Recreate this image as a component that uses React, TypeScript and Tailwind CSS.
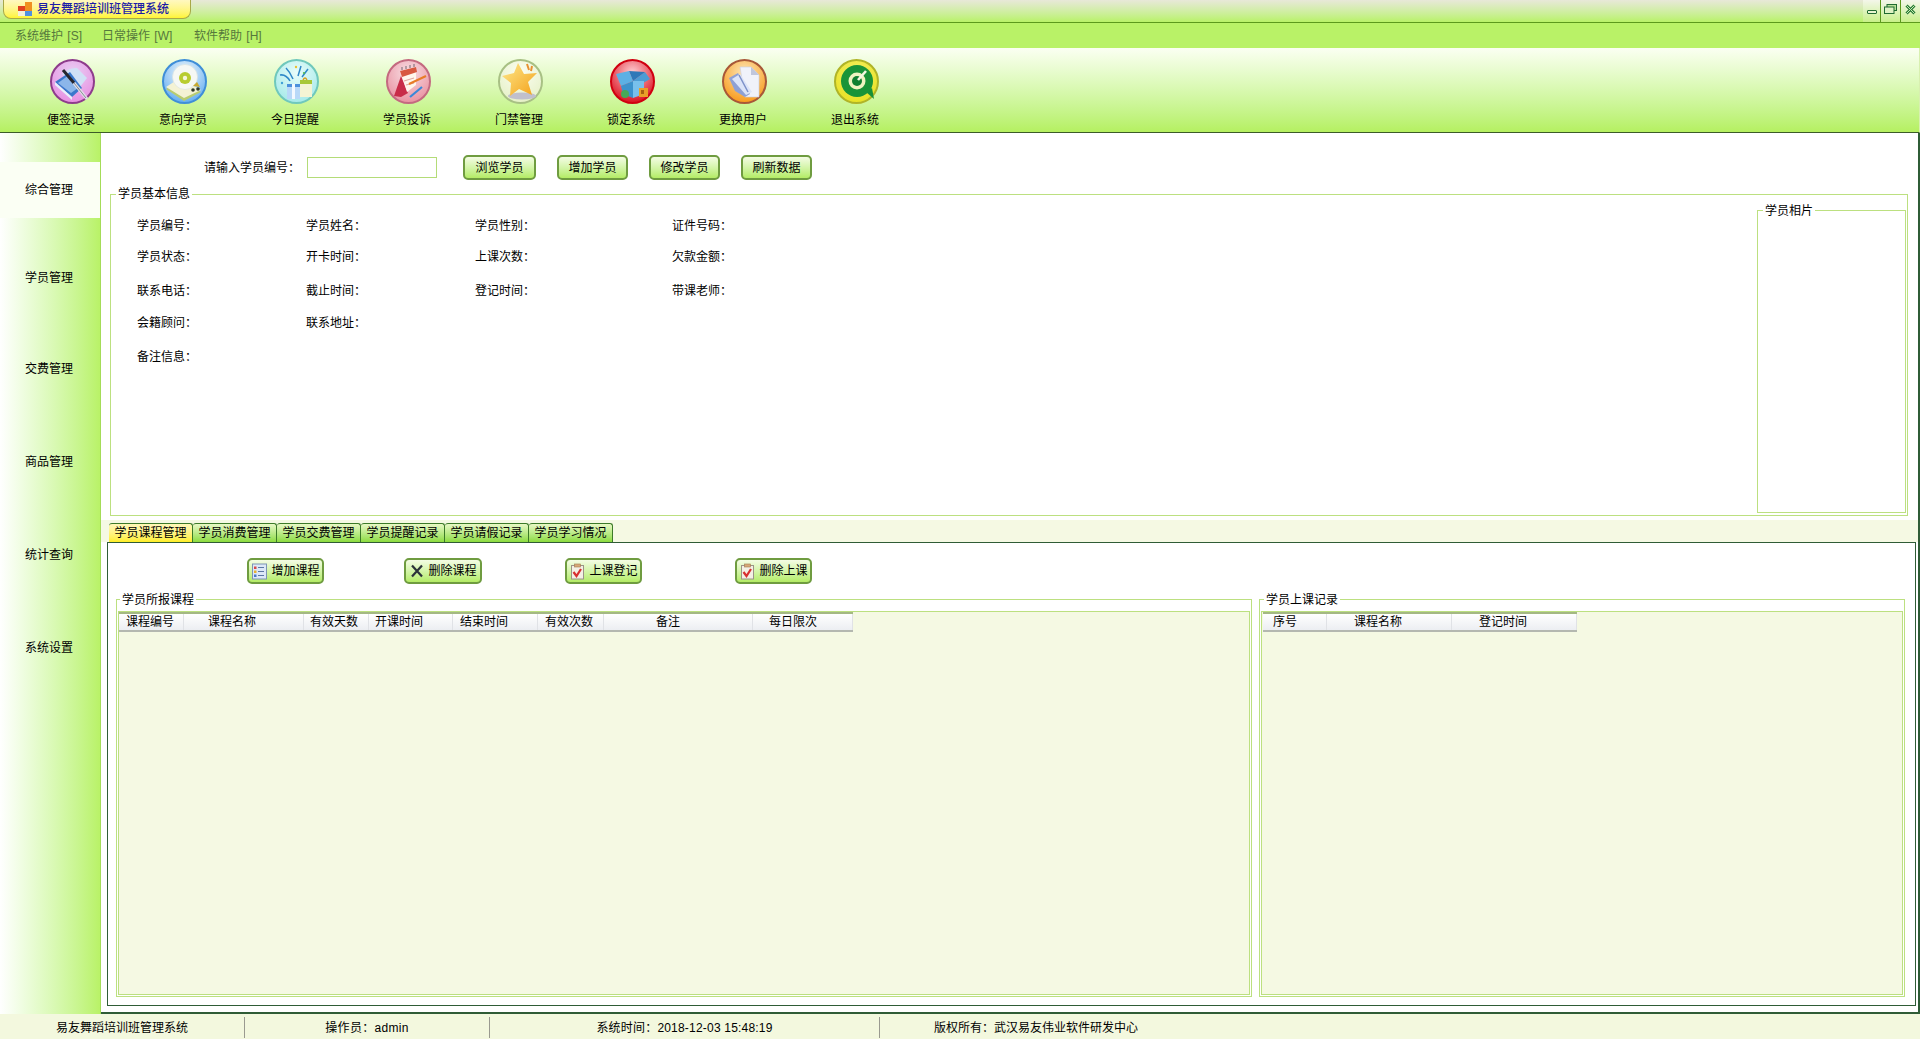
import type { ReactNode } from 'react';
import { useId } from 'react';

const menus = [
    { label: '系统维护 [S]', w: 'w-[87px]' },
    { label: '日常操作 [W]', w: 'w-[92px]' },
    { label: '软件帮助 [H]', w: 'w-[80px]' },
];
const sideItems = [
    { label: '学员管理', h: 'h-[91px]' },
    { label: '交费管理', h: 'h-[93px]' },
    { label: '商品管理', h: 'h-[93px]' },
    { label: '统计查询', h: 'h-[93px]' },
    { label: '系统设置', h: 'h-[93px]' },
];
const topButtons = [
    { label: '浏览学员', w: 'w-[73px]' },
    { label: '增加学员', w: 'w-[71px]' },
    { label: '修改学员', w: 'w-[71px]' },
    { label: '刷新数据', w: 'w-[71px]' },
];
const tabs = ['学员课程管理', '学员消费管理', '学员交费管理', '学员提醒记录', '学员请假记录', '学员学习情况'];

const fieldRows = [
    { h: 'h-[31px]', items: ['学员编号：', '学员姓名：', '学员性别：', '证件号码：'] },
    { h: 'h-[31px]', items: ['学员状态：', '开卡时间：', '上课次数：', '欠款金额：'] },
    { h: 'h-[37px]', items: ['联系电话：', '截止时间：', '登记时间：', '带课老师：'] },
    { h: 'h-[27px]', items: ['会籍顾问：', '联系地址：'] },
    { h: 'h-[42px]', items: ['备注信息：'] },
];
const fieldWidths = ['w-[169px]', 'w-[169px]', 'w-[197px]', 'w-[100px]'];

const courseCols = [
    { label: '课程编号', w: 'w-[65px]', pl: 'pl-[7px]' },
    { label: '课程名称', w: 'w-[120px]', pl: 'pl-[24px]' },
    { label: '有效天数', w: 'w-[65px]', pl: 'pl-[6px]' },
    { label: '开课时间', w: 'w-[84px]', pl: 'pl-[6px]' },
    { label: '结束时间', w: 'w-[85px]', pl: 'pl-[7px]' },
    { label: '有效次数', w: 'w-[66px]', pl: 'pl-[7px]' },
    { label: '备注', w: 'w-[149px]', pl: 'pl-[52px]' },
    { label: '每日限次', w: 'w-[100px]', pl: 'pl-[16px]' },
];
const recordCols = [
    { label: '序号', w: 'w-[64px]', pl: 'pl-[10px]' },
    { label: '课程名称', w: 'w-[125px]', pl: 'pl-[27px]' },
    { label: '登记时间', w: 'w-[125px]', pl: 'pl-[27px]' },
];

function Orb({ ring, inner, edge, children }: { ring: string; inner: string; edge: string; children: ReactNode }) {
    const id = useId();
    return (
        <svg width="45" height="45" viewBox="0 0 45 45">
            <defs>
                <radialGradient id={id} cx="50%" cy="30%" r="75%">
                    <stop offset="0%" stopColor={inner} />
                    <stop offset="100%" stopColor={ring} />
                </radialGradient>
            </defs>
            <circle cx="22.5" cy="22.5" r="21.5" fill={`url(#${id})`} stroke={edge} strokeWidth="2" />
            {children}
        </svg>
    );
}

const toolbar: { label: string; icon: ReactNode }[] = [
    {
        label: '便签记录',
        icon: (
            <Orb ring="#e88ae0" inner="#e8d0f4" edge="#8e3c8c">
                <path d="M12 15 Q20 8 27 9 L37 19 L30 28 Z" fill="#d0e0f6" />
                <path d="M5 23 L20 13 L32 29 L22 38 Z" fill="#3a78cc" />
                <path d="M8 24 L19 16 L28 29 L21 34 Z" fill="#8cb6ea" />
                <path d="M5 23 L22 38 L22 41 L5 26 Z" fill="#e8f0fa" />
                <path d="M13 11 L24 24" stroke="#26262e" strokeWidth="3" />
                <path d="M24 24 L37 40" stroke="#e0e0e8" strokeWidth="3" />
                <path d="M24 24 L36 39" stroke="#8a8a94" strokeWidth="1" />
            </Orb>
        ),
    },
    {
        label: '意向学员',
        icon: (
            <Orb ring="#5aa8f0" inner="#f4fafc" edge="#3f8ed8">
                <path d="M4 30 L18 21 L39 33 L22 42 Z" fill="#b8cc70" />
                <path d="M4 28 L18 19 L39 31 L22 39 Z" fill="#f4f2d4" />
                <circle cx="23" cy="18" r="12.5" fill="#f6f8f4" stroke="#d8e0dc" strokeWidth="0.6" />
                <circle cx="23" cy="19" r="6" fill="#b8cc30" />
                <circle cx="23" cy="19" r="2.2" fill="#f6f6dc" />
                <path d="M31 27 L35 23 L38 28 Z" fill="#c8a830" />
                <circle cx="31" cy="31" r="1.8" fill="#303828" />
                <circle cx="36" cy="30" r="1.8" fill="#303828" />
            </Orb>
        ),
    },
    {
        label: '今日提醒',
        icon: (
            <Orb ring="#a0e8e8" inner="#e8fcfa" edge="#70c8bc">
                <rect x="13" y="27" width="13" height="13" fill="#b8d8f8" />
                <rect x="13" y="25" width="13" height="3" fill="#4c90dc" />
                <rect x="18" y="25" width="3" height="15" fill="#f2f8ff" />
                <rect x="26" y="25" width="12" height="13" fill="#f4f4d4" />
                <path d="M26 21 H38 V25 H26 Z" fill="#a8c838" />
                <path d="M29 21 Q31 17 33 21" fill="none" stroke="#d8a020" strokeWidth="1.4" />
                <path d="M6 16 Q12 15 16 22 M12 9 Q16 13 19 20 M27 7 L24 17 M34 10 L28 18" fill="none" stroke="#2f88c8" strokeWidth="1.5" />
                <circle cx="22" cy="8" r="1.2" fill="#e8c030" />
                <circle cx="8" cy="24" r="1.2" fill="#40a0d8" />
                <circle cx="30" cy="14" r="1.1" fill="#50b850" />
            </Orb>
        ),
    },
    {
        label: '学员投诉',
        icon: (
            <Orb ring="#e88c9c" inner="#f8dfe4" edge="#c46a80">
                <path d="M8 37 L15 17 L22 34 L15 38 Z" fill="#c82c48" />
                <path d="M14 12 L30 8 L30 26 L21 33 Z" fill="#fff6ec" />
                <path d="M14 12 L30 8 L31 13 L16 18 Z" fill="#d85840" />
                <path d="M16 11 L16 8 M20 10 L20 7 M24 9 L24 6 M28 8 L28 5" stroke="#706870" strokeWidth="1" />
                <path d="M18 22 L28 19 M20 26 L28 24" stroke="#e0a8a0" strokeWidth="1.2" />
                <path d="M23 25 L40 17" stroke="#e87c28" strokeWidth="2" />
                <path d="M24 38 L36 28" stroke="#3a88d8" strokeWidth="2.2" />
            </Orb>
        ),
    },
    {
        label: '门禁管理',
        icon: (
            <Orb ring="#e4f0c4" inner="#fbfdf2" edge="#a8c084">
                <defs>
                    <linearGradient id="star-fill" x1="0" y1="0" x2="1" y2="1">
                        <stop offset="0%" stopColor="#fde98c" />
                        <stop offset="100%" stopColor="#f4a018" />
                    </linearGradient>
                </defs>
                <ellipse cx="24" cy="37" rx="14" ry="3.5" fill="#c0c0cc" />
                <path d="M20 4 L26 15 L39 14 L30 23 L34 36 L21 30 L12 37 L13 24 L4 17 L16 14 Z" fill="url(#star-fill)" />
                <path d="M29 5 L31 11 M34 7 L33 12" stroke="#e89030" strokeWidth="2" />
            </Orb>
        ),
    },
    {
        label: '锁定系统',
        icon: (
            <Orb ring="#d80010" inner="#ffd0d4" edge="#d00010">
                <path d="M6 15 L19 12 L23 22 L11 27 Z" fill="#5cb0e4" />
                <path d="M23 22 L35 13 L40 20 L28 27 Z" fill="#4c9cd4" />
                <path d="M19 12 L35 13 L23 22 Z" fill="#2f78b8" />
                <path d="M11 27 L23 22 L23 39 L13 35 Z" fill="#3c92cc" />
                <path d="M23 22 L34 22 L34 35 L23 39 Z" fill="#78c0ec" />
                <rect x="29" y="29" width="9" height="9" fill="#e8a028" />
                <rect x="31" y="31" width="3" height="4" fill="#a86010" />
                <circle cx="15" cy="35" r="4" fill="#48a858" />
            </Orb>
        ),
    },
    {
        label: '更换用户',
        icon: (
            <Orb ring="#f89410" inner="#fde8b8" edge="#a85838">
                <path d="M18 8 L29 8 L37 16 L37 38 L23 38 Z" fill="#f0f2fa" stroke="#c8cce0" strokeWidth="0.6" />
                <path d="M29 8 L37 16 L29 16 Z" fill="#c0c6dc" />
                <path d="M7 19 L16 14 L28 35 L23 38 L13 32 Z" fill="#8ea0d4" />
                <path d="M10 20 L18 15 L30 33 L24 36 Z" fill="#dce4f8" />
                <path d="M17 16 L26 33" stroke="#7c90c8" strokeWidth="1.5" />
            </Orb>
        ),
    },
    {
        label: '退出系统',
        icon: (
            <Orb ring="#e8e020" inner="#f4f060" edge="#b0b428">
                <path d="M32 33 L40 40 L38 29 Z" fill="#189038" />
                <circle cx="23" cy="22" r="16" fill="#1a9438" />
                <circle cx="23" cy="22" r="8.5" fill="#f0f4c0" />
                <circle cx="23" cy="22" r="5" fill="#108030" />
                <path d="M24 21 L32 12" stroke="#f4f8e0" strokeWidth="2.6" />
            </Orb>
        ),
    },
];

function GreenButton({ className, children }: { className: string; children: ReactNode }) {
    return (
        <div
            className={`flex items-center justify-center rounded-[5px] border-2 border-[#6f9c40] bg-gradient-to-b from-[#f4fce4] to-[#b4ec64] text-[12px] text-black ${className}`}
        >
            {children}
        </div>
    );
}

function Legend({ children, className }: { children: ReactNode; className: string }) {
    return <span className={`absolute bg-white px-[2px] text-[12px] leading-[15px] text-black ${className}`}>{children}</span>;
}

function TableHeader({ cols, className }: { cols: { label: string; w: string; pl: string }[]; className: string }) {
    return (
        <div className={`flex h-[20px] border-t-2 border-b-2 border-t-[#a4b884] border-b-[#b4b8b0] bg-gradient-to-b from-white to-[#eceef2] ${className}`}>
            {cols.map((col) => (
                <div key={col.label} className={`border-r border-[#e0e2e6] text-[12px] leading-[16px] whitespace-nowrap ${col.w} ${col.pl}`}>
                    {col.label}
                </div>
            ))}
        </div>
    );
}

function ListIcon() {
    return (
        <svg width="17" height="17" viewBox="0 0 17 17">
            <rect x="1.5" y="1" width="14" height="15" fill="#dce8f8" stroke="#7c94b4" />
            <path d="M7 4.5 H13 M7 8.5 H13 M7 12.5 H13" stroke="#5c78a4" />
            <rect x="3" y="3.5" width="2.5" height="2.5" fill="#d84848" />
            <rect x="3" y="7.5" width="2.5" height="2.5" fill="#e8b030" />
            <rect x="3" y="11.5" width="2.5" height="2.5" fill="#4878c8" />
        </svg>
    );
}

function CrossIcon() {
    return (
        <svg width="16" height="16" viewBox="0 0 16 16">
            <path d="M3 2.5 L13 13.5 M13 2.5 L3 13.5" stroke="#2c323a" strokeWidth="2.2" />
        </svg>
    );
}

function CheckIcon() {
    return (
        <svg width="17" height="17" viewBox="0 0 17 17">
            <rect x="2.5" y="2.5" width="12" height="13.5" fill="#f4f0e4" stroke="#9c9488" />
            <rect x="5.5" y="1" width="6" height="3" fill="#d8a878" stroke="#a07850" strokeWidth="0.6" />
            <path d="M4.5 9 L7.5 13 L12 6" fill="none" stroke="#d83030" strokeWidth="2.2" />
        </svg>
    );
}

export default function App() {
    return (
        <div className="flex h-[1039px] w-[1920px] flex-col overflow-hidden bg-white font-['Liberation_Sans','Noto_Sans_CJK_SC',sans-serif] text-black">
            {/* title bar */}
            <div className="flex h-[23px] items-start justify-between border-b border-[#5c9a1c] bg-gradient-to-b from-[#e8e8d8] to-[#b9f267]">
                <div className="ml-[3px] flex h-[19px] w-[188px] items-center rounded-b-[8px] border border-t-0 border-[#a8a848] bg-gradient-to-b from-[#fff8c0] to-[#fff430] pl-[14px]">
                    <svg width="15" height="14" viewBox="0 0 15 14" className="mr-[4px] shrink-0">
                        <rect x="0" y="4" width="7" height="5" fill="#e04020" />
                        <rect x="7" y="0" width="7" height="9" fill="#f09020" />
                        <rect x="7" y="9" width="7" height="5" fill="#5090e0" />
                        <rect x="0" y="9" width="7" height="5" fill="#f4f0d8" />
                    </svg>
                    <span className="text-[12px] leading-none font-medium whitespace-nowrap text-[#1c1ca8]">易友舞蹈培训班管理系统</span>
                </div>
                <div className="flex h-[22px] w-[57px] bg-gradient-to-b from-[#f4f6ea] to-[#c8f088]">
                    <div className="flex h-full w-[18px] justify-center border-r border-[#5c9a1c] pt-[10px]">
                        <div className="h-[4px] w-[10px] rounded-[1px] border border-[#1f6a30] bg-[#e8f4d0]" />
                    </div>
                    <div className="flex h-full w-[20px] justify-center border-r border-[#5c9a1c] pt-[4px]">
                        <svg width="13" height="10" viewBox="0 0 13 10">
                            <rect x="3" y="0.5" width="9.5" height="6" fill="#b8e098" stroke="#1f6a30" />
                            <rect x="0.5" y="3" width="9.5" height="6.5" fill="#dff2c4" stroke="#1f6a30" />
                        </svg>
                    </div>
                    <div className="flex h-full w-[19px] justify-center pt-[4px]">
                        <svg width="11" height="11" viewBox="0 0 11 11">
                            <path d="M1.5 1.5 L9.5 9.5 M9.5 1.5 L1.5 9.5" stroke="#2a7a38" strokeWidth="3" />
                            <path d="M1.5 1.5 L9.5 9.5 M9.5 1.5 L1.5 9.5" stroke="#c8eeb0" strokeWidth="1" />
                        </svg>
                    </div>
                </div>
            </div>

            {/* menu */}
            <div className="flex h-[25px] items-center bg-[#b9f267] pl-[15px]">
                {menus.map((menu) => (
                    <span key={menu.label} className={`text-[12px] whitespace-nowrap text-[#55783c] [word-spacing:1px] ${menu.w}`}>
                        {menu.label}
                    </span>
                ))}
            </div>

            {/* toolbar */}
            <div className="flex h-[85px] border-b border-r border-b-[#3c5c28] border-r-[#d8f0b0] bg-gradient-to-b from-[#fbfff2] to-[#b5f060] pl-[16px]">
                {toolbar.map((item) => (
                    <div key={item.label} className="flex w-[112px] flex-col items-center pt-[11px]">
                        <div className="h-[45px]">{item.icon}</div>
                        <span className="mt-[9px] -translate-x-[1px] text-[12px] leading-[15px] whitespace-nowrap">{item.label}</span>
                    </div>
                ))}
            </div>

            <div className="flex min-h-0 flex-1">
                {/* side nav */}
                <div className="w-[101px] shrink-0 border-r border-[#a4dc58] bg-gradient-to-r from-white to-[#b9f267] pr-[2px]">
                    <div className="h-[29px]" />
                    <div className="-mr-[2px] flex h-[56px] items-center justify-center bg-[#fbfff4] pr-[2px] text-[12px]">综合管理</div>
                    {sideItems.map((item) => (
                        <div key={item.label} className={`pt-[53px] text-center text-[12px] leading-[15px] ${item.h}`}>
                            {item.label}
                        </div>
                    ))}
                </div>

                {/* main */}
                <div className="flex min-w-0 flex-1 flex-col border-r-2 border-b-2 border-[#2f5c36] bg-white">
                    <div className="flex h-[61px] items-start pl-[103px] pt-[25px]">
                        <span className="w-[103px] pt-[2px] text-[12px] leading-[16px] whitespace-nowrap">请输入学员编号：</span>
                        <div className="-mt-[1px] h-[21px] w-[130px] border border-[#b4dc78] bg-white" />
                        <div className="-mt-[3px] ml-[26px] flex gap-[21px]">
                            {topButtons.map((btn) => (
                                <GreenButton key={btn.label} className={`h-[25px] ${btn.w}`}>
                                    {btn.label}
                                </GreenButton>
                            ))}
                        </div>
                    </div>

                    {/* basic info */}
                    <div className="relative ml-[9px] mr-[10px] flex h-[322px] justify-between border border-[#bce080] pt-[15px] pr-[1px] pb-[2px] pl-[26px]">
                        <Legend className="-top-[8px] left-[5px]">学员基本信息</Legend>
                        <div className="flex flex-col">
                            {fieldRows.map((row) => (
                                <div key={row.items[0]} className={`flex items-center ${row.h}`}>
                                    {row.items.map((item, i) => (
                                        <div key={item} className={`text-[12px] whitespace-nowrap ${fieldWidths[i]}`}>
                                            {item}
                                        </div>
                                    ))}
                                </div>
                            ))}
                        </div>
                        <div className="relative w-[149px] border border-[#bce080]">
                            <Legend className="-top-[7px] left-[5px]">学员相片</Legend>
                        </div>
                    </div>

                    {/* tabs */}
                    <div className="mt-[4px] flex h-[22px] items-end bg-[#f5f9e3] pl-[8px]">
                        {tabs.map((tab, i) => (
                            <div
                                key={tab}
                                className={`flex h-[19px] w-[84px] items-center justify-center rounded-t-[3px] border-t border-r border-[#3c7a28] bg-gradient-to-b text-[12px] whitespace-nowrap ${
                                    i === 0 ? 'from-[#fff8b8] to-[#ffee20]' : 'from-[#e8f8c4] to-[#8cdc3c]'
                                }`}
                            >
                                {tab}
                            </div>
                        ))}
                    </div>

                    {/* tab panel */}
                    <div className="ml-[6px] mr-[2px] flex h-[464px] flex-col border border-[#2f5c36] px-[8px]">
                        <div className="flex h-[56px] items-start pt-[15px] pl-[131px]">
                            <GreenButton className="h-[26px] w-[77px] gap-[3px]">
                                <ListIcon />
                                增加课程
                            </GreenButton>
                            <GreenButton className="ml-[80px] h-[26px] w-[78px] gap-[3px]">
                                <CrossIcon />
                                删除课程
                            </GreenButton>
                            <GreenButton className="ml-[83px] h-[26px] w-[77px] gap-[3px]">
                                <CheckIcon />
                                上课登记
                            </GreenButton>
                            <GreenButton className="ml-[93px] h-[26px] w-[77px] gap-[3px]">
                                <CheckIcon />
                                删除上课
                            </GreenButton>
                        </div>
                        <div className="flex h-[398px] gap-[7px]">
                            <div className="relative w-[1136px] border border-[#bce080] px-[1px] pt-[11px] pb-[1px]">
                                <Legend className="-top-[7px] left-[3px]">学员所报课程</Legend>
                                <div className="h-full border border-[#bce080] bg-[#f5f9e3]">
                                    <TableHeader cols={courseCols} className="w-[734px]" />
                                </div>
                            </div>
                            <div className="relative w-[646px] border border-[#bce080] px-[1px] pt-[11px] pb-[1px]">
                                <Legend className="-top-[7px] left-[4px]">学员上课记录</Legend>
                                <div className="h-full border border-[#bce080] bg-[#f5f9e3]">
                                    <TableHeader cols={recordCols} className="ml-[1px] w-[314px]" />
                                </div>
                            </div>
                        </div>
                    </div>
                </div>
            </div>

            {/* status bar */}
            <div className="flex h-[25px] items-center bg-[#f3f8de] pt-[2px] text-[12px]">
                <div className="flex h-[21px] w-[245px] items-center justify-center border-r border-[#9a9a90]">易友舞蹈培训班管理系统</div>
                <div className="flex h-[21px] w-[245px] items-center justify-center border-r border-[#9a9a90] tracking-[0.3px]">操作员：admin</div>
                <div className="flex h-[21px] w-[390px] items-center justify-center border-r border-[#9a9a90] tracking-[0.2px]">系统时间：2018-12-03 15:48:19</div>
                <div className="pl-[54px] whitespace-nowrap">版权所有：武汉易友伟业软件研发中心</div>
            </div>
        </div>
    );
}
